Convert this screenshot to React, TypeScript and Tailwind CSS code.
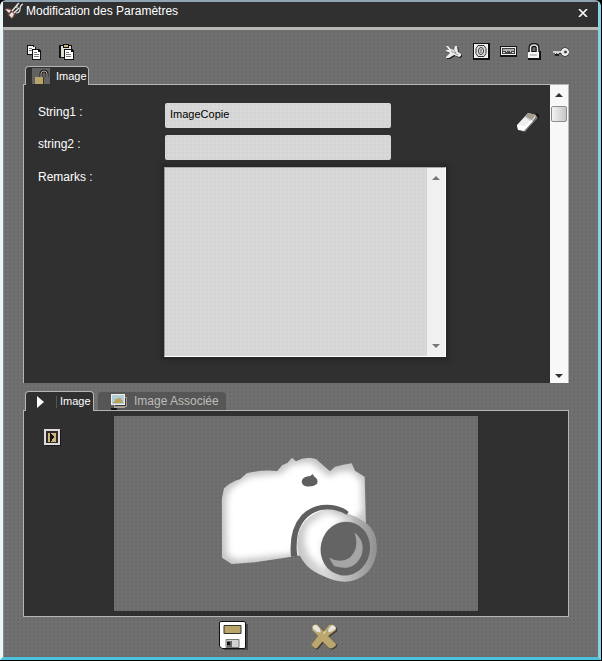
import { useState } from "react";
import type { ReactNode } from "react";

const texture =
  "bg-[#707070] bg-[radial-gradient(circle,#696969_1px,transparent_1px)] bg-[length:4px_4px]";
const fieldTexture =
  "bg-[#d8d8d8] bg-[radial-gradient(circle,#d3d3d3_1px,transparent_1px)] bg-[length:4px_4px]";

function IconButton({ label, children }: { label: string; children: ReactNode }) {
  return (
    <button type="button" aria-label={label} title={label} className="block shrink-0 cursor-pointer">
      {children}
    </button>
  );
}

function CopyIcon() {
  return (
    <svg className="block size-4" viewBox="0 0 16 16" shapeRendering="crispEdges">
      <path d="M0 1h7v2h2v8H0z" fill="#111" />
      <path d="M1 2h5v1h2v7H1z" fill="#f4f4f4" />
      <path d="M2 4h3v1H2zM2 6h3v1H2z" fill="#777" />
      <path d="M5 5h7l2 2v9H5z" fill="#111" />
      <path d="M6 6h5v2h2v7H6z" fill="#fff" />
      <path d="M7 8h3v1H7zM7 10h5v1H7zM7 12h5v1H7z" fill="#777" />
    </svg>
  );
}

function PasteIcon() {
  return (
    <svg className="block size-4" viewBox="0 0 16 16" shapeRendering="crispEdges">
      <path d="M0 1h13v13H0z" fill="#111" />
      <path d="M2 2h10v11H2z" fill="#dedbd3" />
      <path d="M4 0h6v4H4z" fill="#111" />
      <path d="M5 1h4v2H5z" fill="#c8b477" />
      <path d="M5 5h8l2 2v9H5z" fill="#111" />
      <path d="M6 6h6v2h2v7H6z" fill="#fff" />
      <path d="M7 8h3v1H7zM7 10h5v1H7zM7 12h5v1H7z" fill="#777" />
    </svg>
  );
}

function PlaneIcon() {
  const plane = "M1 2h2l3 3 3 1 1-4h2l1 6 3 2v2l-2 1-5-2-5 3H1v-1l4-4-4-2V6h3z";
  return (
    <svg className="block h-4 w-[18px]" viewBox="0 0 18 16">
      <path d={plane} fill="#1b1b1b" transform="translate(1 1)" />
      <path d={plane} fill="#ececec" />
      <path d="M6 7l7 4M9 6l2 3" stroke="#999" fill="none" />
    </svg>
  );
}

function SafeIcon() {
  return (
    <svg className="block h-[17px] w-[17px]" viewBox="0 0 17 17">
      <path d="M0 0h17v17H0z" fill="#111" />
      <path d="M1 1h14v14H1z" fill="#f1f1f1" />
      <path d="M5 2.500h6l2 3v5l-2 3H5l-2-3v-5z" fill="#ddd" stroke="#333" />
      <ellipse cx="8" cy="8" rx="2.5" ry="3.5" fill="#eee" stroke="#333" />
      <path d="M8 6v4" stroke="#444" />
    </svg>
  );
}

function CardIcon() {
  return (
    <svg className="block h-[17px] w-[17px]" viewBox="0 0 17 17" shapeRendering="crispEdges">
      <path d="M0 3h17v11H0z" fill="#151515" />
      <path d="M1 4h15v8H1z" fill="#eee" />
      <path d="M2 5h13v6H2z" fill="#444" />
      <path d="M3 6h11v2H3z" fill="#b0aca6" />
      <path d="M3 9h2v1H3zM6 8h1v1H6zM10 8h1v1h-1zM12 9h2v1h-2z" fill="#ddd" />
    </svg>
  );
}

function LockIcon() {
  return (
    <svg className="block h-[17px] w-4" viewBox="0 0 16 17">
      <path d="M1 8h13v9H1z" fill="#111" />
      <path d="M3.500 10V5q0-3 3.500-3t3.500 3v5" fill="none" stroke="#111" strokeWidth="4" />
      <path d="M3.500 9V5q0-3 3.500-3t3.500 3v4" fill="none" stroke="#e8e8e8" strokeWidth="1.5" />
      <path d="M1 9h11v6H1z" fill="#f4f4f4" />
      <path d="M3 12h7" stroke="#999" />
    </svg>
  );
}

function KeyIcon() {
  return (
    <svg className="block size-4" viewBox="0 0 16 16">
      <path d="M1 9h10M3 9v3M5 9v3" stroke="#222" strokeWidth="2" />
      <circle cx="12" cy="8" r="4.5" fill="#222" />
      <path d="M0 8h10M2.500 8v2M5 8v2" stroke="#eee" strokeWidth="1.5" />
      <circle cx="12" cy="8" r="3.5" fill="#ddd" stroke="#fff" />
      <circle cx="12.500" cy="8" r="1.3" fill="#333" />
    </svg>
  );
}

function UnlockedIcon() {
  return (
    <svg className="block h-4 w-[18px] bg-[#626262]" viewBox="0 0 18 16">
      <path d="M9 9V6q0-3 3-3t3 3v3" fill="none" stroke="#292522" strokeWidth="3" />
      <path d="M9 9V6q0-3 3-3t3 3v3" fill="none" stroke="#aaa59b" />
      <path d="M3 9h8v7H3z" fill="#b8a56a" />
      <path d="M11.500 9v7" stroke="#3b3426" />
    </svg>
  );
}

function EraserIcon() {
  return (
    <svg className="block size-6" viewBox="0 0 24 24">
      <path d="M3 20l6 2L23 8V5l-3-2z" fill="#111" />
      <path d="M5 21l4 1L22 8l-2-3z" fill="#777" />
      <path d="M1 15L12 3l8 2-1 3L8 20l-6-1z" fill="#eee" />
      <path d="M12 3l8 2-5 6-6-4z" fill="#a69b91" />
      <path d="M1 15l8 1 6-6 2 1-9 10-6-1z" fill="#fff" />
      <path d="M9 7l6 3" stroke="#ddd" />
    </svg>
  );
}

function MonitorIcon() {
  return (
    <svg className="block h-[17px] w-[18px]" viewBox="0 0 18 17" shapeRendering="crispEdges">
      <path d="M4 4h13v10H4z" fill="#a09b92" />
      <path d="M5 5h11v8H5z" fill="#393939" />
      <path d="M1 1h14v11H1z" fill="#f0eee9" />
      <path d="M2 2h12v9H2z" fill="#b2cbd4" />
      <path d="M3 9l2-2V6h3V5h3v2l2 1v2H3z" fill="#b9a262" />
      <path d="M4 14h11v1H4z" fill="#aaa59c" />
      <path d="M1 15h6v2H1z" fill="#151515" />
    </svg>
  );
}

function StepIcon() {
  return (
    <svg className="block h-[17px] w-[17px]" viewBox="0 0 17 17" shapeRendering="crispEdges">
      <path d="M1 1h16v16H1z" fill="#181818" />
      <path d="M0 0h16v16H0z" fill="#dedcd9" />
      <path d="M2 2h12v12H2z" fill="#34282a" />
      <path d="M4 4h8v9H4z" fill="#cbb678" />
      <path d="M6 4h1l3 4-3 5H6z" fill="#111" />
    </svg>
  );
}

function AppIcon() {
  return (
    <svg className="block h-[18px] w-[18px]" viewBox="0 0 18 18">
      <path d="M1 6l6 1 4 3-1 4-3 3-4-3z" fill="#6b4038" />
      <path d="M0 7l6 1-2 3zM4 13l3-3 2 2-2 4z" fill="#e9e3df" />
      <path d="M7 9l6-7M9 11l5-5" stroke="#eee" strokeWidth="1.3" fill="none" />
      <path d="M14 1q-3 2-2 5M18 2q-3 1-3 5t-4 4" stroke="#ddd" strokeWidth="1.2" fill="none" />
    </svg>
  );
}

function SaveIcon() {
  return (
    <svg className="block h-[29px] w-[29px]" viewBox="0 0 29 29">
      <path d="M3 3h26v26H5z" fill="#444" />
      <path d="M.5 2Q.5.5 2 .5h23q1.500 0 1.500 1.500v24q0 1.500-1.500 1.500H3L.5 25z" fill="#fff" stroke="#111" />
      <path d="M5 4.500h17v8H5z" fill="#b9a668" stroke="#333" />
      <path d="M7 18.500h13v8H7z" fill="#d2d2d2" stroke="#777" />
      <path d="M8 20h5v6H8z" fill="#666" />
      <path d="M8 21h3v3H8z" fill="#111" />
    </svg>
  );
}

function CancelIcon() {
  const cross = "M4 2h4l6 7 6-7h4l3 3v3l-8 6 8 8v2l-4 3h-3l-7-7-6 7H5l-4-4 7-9-6-6V4z";
  return (
    <svg className="block h-7 w-7" viewBox="0 0 29 28">
      <path d={cross} fill="#3c3028" transform="translate(1 1)" />
      <path d={cross} fill="#b9a76f" stroke="#6b5c40" strokeWidth=".5" />
      <path d="M3 4l3-2 4 4 1 4-3 0-3-2-2-2zM25 3l2 3-4 3-4 1 0-3 3-4z" fill="#e5e4e1" />
      <path d="M14 12l2-3" stroke="#eee" />
    </svg>
  );
}

function Arrow({ up, faint }: { up?: boolean; faint?: boolean }) {
  return (
    <svg className="block h-1 w-2" viewBox="0 0 8 4">
      <path d={up ? "M0 4l4-4 4 4z" : "M0 0l4 4 4-4z"} fill={faint ? "#777" : "#333"} />
    </svg>
  );
}

function Camera() {
  return (
    <svg
      role="img"
      aria-label="Appareil photo"
      className={`block w-full ${texture}`}
      viewBox="-258 -72 1092 585"
    >
      <defs>
        <filter id="soft" x="-10%" y="-10%" width="120%" height="120%">
          <feGaussianBlur stdDeviation="10" />
        </filter>
        <clipPath id="bodyClip">
          <path d="M65 180L72 145Q92 126 120 118L140 100Q185 88 232 93L246 76L262 69L276 53L288 64L306 56L328 53L348 57L390 94L405 80L430 74L455 70L465 92L494 110L498 260L420 330L275 350L165 367L95 372L66 353Z" />
        </clipPath>
        <clipPath id="barrelClip">
          <path d="M380 208L430 215L470 232L498 249Q535 275 530 335Q520 405 455 423Q415 431 370 408Q310 385 293 330Q286 280 315 244Q345 213 380 208Z" />
        </clipPath>
        <linearGradient id="barrel" x1="0" x2="1">
          <stop offset="0" stopColor="#c4c4c4" />
          <stop offset=".35" stopColor="#d8d8d8" />
          <stop offset=".65" stopColor="#b8b8b8" />
          <stop offset="1" stopColor="#8c8c8c" />
        </linearGradient>
      </defs>
      <g clipPath="url(#bodyClip)">
        <path d="M50 30h470v360H50z" fill="#c6c6c6" />
        <path
          d="M88 180L96 155Q125 132 155 118L245 110L280 82L330 76L385 120L415 105L450 102L475 125L477 210L440 250L400 300L270 333L110 350L90 338Z"
          fill="#fff"
          stroke="#fff"
          strokeWidth="18"
          filter="url(#soft)"
        />
      </g>
      <g clipPath="url(#barrelClip)">
        <path d="M280 200h260v240H280z" fill="url(#barrel)" />
        <path d="M325 255Q300 300 330 350L375 390L365 310L420 245L470 240L380 220Z" fill="#fff" filter="url(#soft)" />
      </g>
      <path
        d="M273 350Q265 270 305 225Q340 190 395 195Q430 200 446 216L440 224Q400 203 360 211Q310 226 294 280Q287 315 292 350Z"
        fill="#5f5f5f"
      />
      <ellipse cx="436" cy="326" rx="74" ry="81" transform="rotate(12 436 326)" fill="#646464" />
      <path d="M463 277Q497 305 485 344Q463 398 402 378L387 353Q422 371 449 353Q480 325 463 277Z" fill="#a5a5a5" />
      <path d="M305 124Q308 109 331 108L338 102L342 109Q357 119 351 132Q335 143 315 138Q305 134 305 124Z" fill="#5f5f5f" />
    </svg>
  );
}

export default function App() {
  const [name, setName] = useState("ImageCopie");
  const [second, setSecond] = useState("");
  const [remarks, setRemarks] = useState("");

  return (
    <div className="bg-black pr-px pb-px font-['Liberation_Sans',Arial,sans-serif] text-xs text-white">
      <div className="flex min-h-[660px] flex-col rounded-t-md border-t-2 border-r-[3px] border-b-[3px] border-l-[3px] border-t-[#8fa5b3] border-r-[#86d3e8] border-b-[#4cc3da] border-l-[#edf5f6]">
        <header className="flex h-[25px] items-start justify-between bg-[#303030] pr-[10px]">
          <div className="flex items-start gap-[3px] pl-[2px]">
            <AppIcon />
            <h1 className="pt-px text-xs leading-4">Modification des Paramètres</h1>
          </div>
          <button type="button" aria-label="Fermer" className="pt-[7px]">
            <svg className="block h-2 w-[10px]" viewBox="0 0 10 8">
              <path d="M1 0l8 8M9 0L1 8" stroke="#fff" strokeWidth="1.6" />
            </svg>
          </button>
        </header>

        <main
          className={`flex grow flex-col border-t-[3px] border-l border-t-[#b9b8b4] border-l-[#7c8e98] pr-[29px] pl-[19px] ${texture}`}
        >
          <div className="flex h-9 items-end justify-between pt-[13px] pb-[6px] pl-1">
            <div className="flex gap-4">
              <IconButton label="Copier"><CopyIcon /></IconButton>
              <IconButton label="Coller"><PasteIcon /></IconButton>
            </div>
            <div className="flex items-center gap-[10px]">
              <IconButton label="Avion"><PlaneIcon /></IconButton>
              <IconButton label="Coffre"><SafeIcon /></IconButton>
              <IconButton label="Carte"><CardIcon /></IconButton>
              <IconButton label="Verrou"><LockIcon /></IconButton>
              <IconButton label="Clé"><KeyIcon /></IconButton>
            </div>
          </div>

          <section>
            <div role="tablist" className="flex pl-[2px]">
              <button
                type="button"
                role="tab"
                aria-selected="true"
                className="relative z-10 -mb-px flex h-[19px] items-center gap-[6px] rounded-t border border-b-0 border-[#b5b5b5] bg-[#303030] pr-px pl-[6px] text-[11px]"
              >
                <UnlockedIcon />
                Image
              </button>
            </div>
            <div className="flex h-[299px] border-t border-l border-[#b5b5b5] bg-[#303030]">
              <form
                className="flex min-w-0 grow justify-between pt-[18px] pr-[10px] pl-[14px]"
                onSubmit={(e) => e.preventDefault()}
              >
                <div className="flex grow flex-col gap-[7px]">
                  <div className="flex">
                    <label htmlFor="string1" className="w-[127px] shrink-0 pt-px leading-4">String1 :</label>
                    <input
                      id="string1"
                      value={name}
                      onChange={(e) => setName(e.target.value)}
                      className={`h-[25px] w-[226px] rounded-xs px-[5px] pb-1 text-[11px] text-black outline-none ${fieldTexture}`}
                    />
                  </div>
                  <div className="flex">
                    <label htmlFor="string2" className="w-[127px] shrink-0 pt-px leading-4">string2 :</label>
                    <input
                      id="string2"
                      value={second}
                      onChange={(e) => setSecond(e.target.value)}
                      className={`h-[25px] w-[226px] rounded-xs px-[5px] pb-1 text-[11px] text-black outline-none ${fieldTexture}`}
                    />
                  </div>
                  <div className="flex">
                    <label htmlFor="remarks" className="w-[126px] shrink-0 pt-[2px] leading-4">Remarks :</label>
                    <div className="flex h-[190px] w-[282px] border-t border-r border-b border-l border-t-[#aaa] border-r-white border-b-white border-l-[#999] shadow-[0_0_4px_3px_#272727]">
                      <textarea
                        id="remarks"
                        value={remarks}
                        onChange={(e) => setRemarks(e.target.value)}
                        className={`min-w-0 grow resize-none overflow-hidden px-[5px] py-1 text-[11px] text-black outline-none ${fieldTexture}`}
                      />
                      <div className="flex w-[18px] flex-col items-center justify-between bg-[#f0f0f0] py-2">
                        <Arrow up faint />
                        <Arrow faint />
                      </div>
                    </div>
                  </div>
                </div>
                <div className="pt-[7px]">
                  <IconButton label="Effacer"><EraserIcon /></IconButton>
                </div>
              </form>
              <div className="flex w-[19px] shrink-0 flex-col items-center border-r border-[#b9b9b9] bg-[#f8f8f8] pt-2 pb-[5px]">
                <Arrow up />
                <div className="mt-[9px] h-4 w-4 rounded-xs border border-[#8d8d8d] bg-linear-to-r from-[#f3f3f3] to-[#c6c6c6]" />
                <div className="grow" />
                <Arrow />
              </div>
            </div>
          </section>

          <section className="pt-2">
            <div role="tablist" className="flex items-end gap-1 pl-[2px]">
              <button
                type="button"
                role="tab"
                aria-selected="true"
                className="relative z-10 -mb-px flex h-5 w-[69px] items-center overflow-hidden rounded-t border border-b-0 border-[#b5b5b5] bg-[#303030] pl-[11px] text-[11px]"
              >
                <svg className="block h-3 w-[7px]" viewBox="0 0 7 12">
                  <path d="M0 0l7 6-7 6z" fill="#fff" />
                </svg>
                <span className="ml-3 h-3 w-px bg-[#565656]" />
                <span className="ml-[3px]">Image</span>
              </button>
              <button
                type="button"
                role="tab"
                aria-selected="false"
                className="flex h-[18px] items-center gap-[6px] rounded-t bg-[#565656] pr-[7px] pl-3 text-[#bdbdb8]"
              >
                <MonitorIcon />
                Image Associée
              </button>
            </div>
            <div className="flex items-start border border-[#b5b5b5] bg-[#303030] py-[5px]">
              <div className="w-[90px] shrink-0 pt-[13px] pl-5">
                <IconButton label="Suivant"><StepIcon /></IconButton>
              </div>
              <div className="min-w-0 grow">
                <Camera />
              </div>
              <div className="w-[90px] shrink-0" />
            </div>
          </section>

          <footer className="flex items-center gap-[62px] pt-1 pb-[6px] pl-[196px]">
            <IconButton label="Enregistrer"><SaveIcon /></IconButton>
            <IconButton label="Annuler"><CancelIcon /></IconButton>
          </footer>
        </main>
      </div>
    </div>
  );
}
